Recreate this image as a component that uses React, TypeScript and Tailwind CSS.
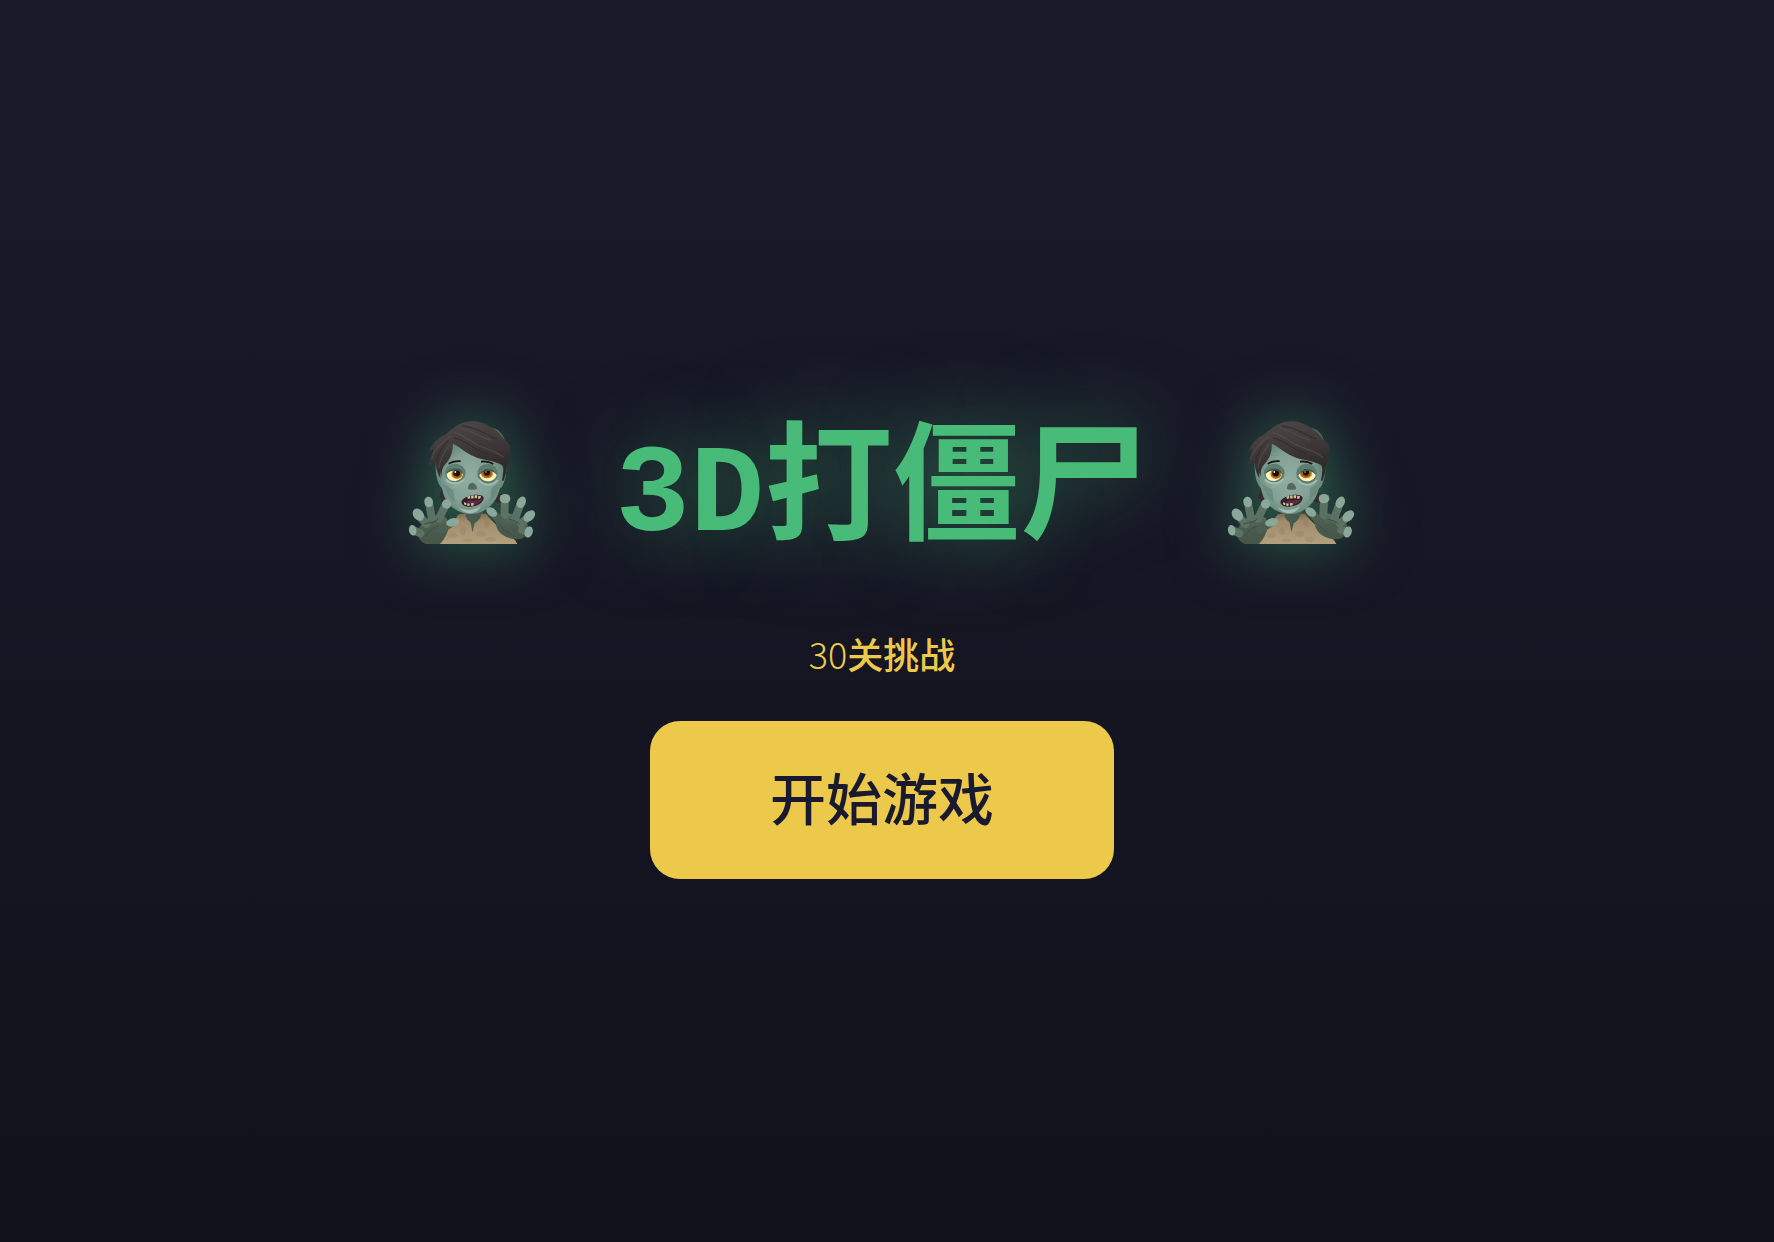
import { useId } from "react";

function Zombie() {
  const id = useId();
  const skin = `${id}-skin`;
  const hair = `${id}-hair`;
  const shirt = `${id}-shirt`;
  const palm = `${id}-palm`;
  const eye = `${id}-eye`;
  const fill = (name: string) => `url(#${name})`;

  return (
    <svg
      viewBox="60 57 381 369"
      role="img"
      aria-label="僵尸"
      className="h-[123px] w-[127px] shrink-0 overflow-visible drop-shadow-[0_0_32px_rgba(72,187,120,0.5)]"
    >
      <defs>
        <radialGradient id={skin} cx="0.48" cy="0.5" r="0.6">
          <stop offset="0" stopColor="#91aea2" />
          <stop offset="0.6" stopColor="#82a194" />
          <stop offset="1" stopColor="#5f7f73" />
        </radialGradient>
        <linearGradient id={hair} x1="0" y1="0" x2="0.3" y2="1">
          <stop offset="0" stopColor="#4f4848" />
          <stop offset="0.5" stopColor="#423b3b" />
          <stop offset="1" stopColor="#30292b" />
        </linearGradient>
        <linearGradient id={shirt} x1="0" y1="0" x2="0" y2="1">
          <stop offset="0" stopColor="#846a4e" />
          <stop offset="0.25" stopColor="#a08c6c" />
          <stop offset="1" stopColor="#b3a07e" />
        </linearGradient>
        <linearGradient id={palm} x1="0" y1="0" x2="0" y2="1">
          <stop offset="0" stopColor="#5b7163" />
          <stop offset="0.5" stopColor="#4a5c4e" />
          <stop offset="1" stopColor="#45564a" />
        </linearGradient>
        <radialGradient id={eye}>
          <stop offset="0.2" stopColor="#1b0c04" />
          <stop offset="0.5" stopColor="#8a4a09" />
          <stop offset="1" stopColor="#d98a1a" />
        </radialGradient>
      </defs>

      {/* hair behind the face */}
      <path d="M302 76c26 4 42 20 46 44l-20-8z" fill="#4c6c59" />
      <path d="M158 262l-10 28 10-3-2 11 34 6-12-45zM318 258l18 20 9-2-5 13 0 13-32-3z" fill="#352b2d" />
      <path d="M140 184c-1 30 4 60 18 74l18-10-4-70zM352 182c2 30-4 60-16 76l-16-8 6-70z" fill="#6b8b7e" />
      <path d="M140 180c0-70 45-115 110-115 62 0 103 34 104 85 1 30-2 66-10 86l-185-2c-12-14-19-34-19-54z" fill={fill(hair)} />

      {/* torn shirt */}
      <path d="M222 322l60 0-4 30-28 40-26-38z" fill="#465f53" />
      <path d="M145 426c10-20 38-50 64-89l20-2 5 17 18 14 20-16 7-15 12 0c22 30 64 62 87 79l7 12z" fill={fill(shirt)} />
      <path d="M228 340c8 13 15 17 18 25l4 26 5-19 2-8c11-7 14-13 17-24l-17-5z" fill="#48594d" />
      <g fill="#8b7757" opacity="0.25">
        <ellipse cx="190" cy="400" rx="14" ry="8" />
        <ellipse cx="222" cy="388" rx="9" ry="12" />
        <ellipse cx="275" cy="395" rx="14" ry="9" />
        <ellipse cx="305" cy="412" rx="16" ry="8" />
        <ellipse cx="236" cy="415" rx="14" ry="6" />
        <ellipse cx="294" cy="365" rx="9" ry="11" />
      </g>

      {/* head */}
      <path d="M193 126c-24 14-39 43-40 73 0 22 3 61 13 85 12 30 46 52 80 52 35 0 66-24 79-54 10-24 19-61 18-88-4-19-20-31-59-38z" fill={fill(skin)} />
      <path d="M160 240c8 14 27 14 33 27 5 11-1 22 8 37l-16-14c-12-15-20-36-25-50zM338 233c-9 19-31 18-33 30-1 12 5 20-4 35 14-10 31-38 37-65z" fill="#64877a" opacity="0.7" />
      <path d="M209 316c18 12 46 11 66-3-5 14-20 21-32 21-14 0-27-8-34-18z" fill="#b0c8bd" opacity="0.8" />
      <path d="M217 205c-10 25-12 43-30 54 20-2 32-15 38-32zM272 210c3 25 20 33 38 40-19 3-36-10-42-25z" fill="#a3beb1" opacity="0.35" />

      {/* eyes */}
      <ellipse cx="199" cy="213" rx="31" ry="28" fill="#5d7d71" />
      <ellipse cx="296" cy="215" rx="31" ry="30" fill="#5d7d71" />
      <path d="M171 233c13 14 41 16 55-2M270 233c14 20 42 20 56 1" fill="none" stroke="#a6beb2" strokeWidth="5" />
      <path d="M173 218c5-12 15-14 30-14 10 0 17 5 19 12-2 14-14 21-27 21-12-1-20-8-22-19z" fill="#fff1bb" />
      <path d="M271 220c5-12 13-16 26-16 14 0 22 6 26 16-4 13-15 18-27 18-13-1-21-8-25-18z" fill="#fff1bb" />
      <ellipse cx="204" cy="216" rx="17" ry="15" fill={fill(eye)} />
      <ellipse cx="294" cy="215" rx="18" ry="14" fill={fill(eye)} />
      <circle cx="203" cy="213" r="10" fill="#150b05" />
      <circle cx="294" cy="210" r="9" fill="#150b05" />
      <circle cx="199" cy="210" r="3" fill="#ffe0a0" />
      <circle cx="291" cy="210" r="2" fill="#ffe0a0" />
      <path d="M172 217c5-14 18-18 32-17 10 0 17 6 19 17-12-14-38-16-51 0zM270 219c8-15 18-18 28-18 12 0 21 6 26 18-12-15-38-17-54 0z" fill="#40584f" />
      <path d="M178 184c8-7 22-11 37-9l0 5c-14-1-26 2-35 8zM276 176c14-2 28 1 38 8l-2 4c-12-6-23-8-36-6z" fill="#171819" />

      {/* nose and mouth */}
      <path d="M236 260c2-13 7-19 15-18 7 1 12 9 14 18-7 4-21 5-29 0z" fill="#56675f" />
      <path d="M218 296c9-11 27-18 43-18 14 0 23 3 23 11-2 13-17 24-39 25-20 1-30-7-27-18z" fill="#361d2b" />
      <path d="M236 298l8-4 7 2 10-2 10 0 6-3 2 3c-8 10-17 15-32 15-9 0-13-5-11-11z" fill="#5a2c40" />
      <g fill="#cfc497">
        <path d="M235 284l8-3 1 8-7 2zM246 281l8-1 0 9-7 1zM257 280l8 0-1 9-7 0zM268 281l8 1-2 8-7 0zM225 301l7 2 0 7-7-3zM235 304l7 1-1 7-6-1zM246 304l8-1 0 7-7 2z" />
      </g>

      {/* fringe */}
      <path d="M112 194c15-18 13-34 23-54-7 3-11 7-15 11 8-26 27-47 62-59 13-22 43-35 72-34 34 3 64 19 78 49 13 3 27 13 33 27-1 8-3 11-3 20-3 15 1 24-8 33l-4 34c-3-12-4-20-11-32-30-16-59-13-85-26-23-10-39-25-63-39 2 20-4 42-17 57-12 13-17 21-16 43-4-13-10-24-14-37l2-17c-9 8-15 20-28 24l2-9z" fill={fill(hair)} />
      <g fill="none" strokeLinecap="round" strokeWidth="4">
        <path d="M196 92c35 9 54 34 91 46 25 8 40 14 57 28M214 80c39 4 58 28 92 34M128 170c10-31 30-50 55-66M150 196c5-30 18-52 33-68" stroke="#5e5555" opacity="0.5" />
        <path d="M196 108c41 9 55 36 100 47M222 72c43 3 65 26 100 38M142 182c3-28 20-50 36-66" stroke="#2b2425" opacity="0.5" />
      </g>

      {/* left hand */}
      <path d="M84 392c4-18 20-28 31-43l36-14 22 14 8 20c-4 24-14 41-28 57l-43 0c-12-6-22-16-26-34z" fill={fill(palm)} />
      <g fill="none" stroke="#5b7163" strokeWidth="24" strokeLinecap="round">
        <path d="M120 303l8 42M170 308l-20 42M88 338l24 28M72 384l22 10" />
        <path d="M190 361l-34 22" stroke="#4c5f52" />
      </g>
      <path d="M106 366c19-6 34-2 42-17M112 402c9-17 18-24 35-29" fill="none" stroke="#3d4f43" strokeWidth="3" />
      <g fill="#8aa899">
        <ellipse cx="119" cy="300" rx="13" ry="16" transform="rotate(-10 119 300)" />
        <ellipse cx="173" cy="306" rx="14" ry="14" />
        <ellipse cx="88" cy="338" rx="15" ry="20" transform="rotate(-38 88 338)" />
        <ellipse cx="71" cy="385" rx="11" ry="16" transform="rotate(-12 71 385)" />
        <ellipse cx="191" cy="361" rx="20" ry="12" transform="rotate(-14 191 361)" />
      </g>

      {/* right hand */}
      <path d="M320 350l27-21 36 12 30 22c7 7 8 22 1 33-7 12-20 18-40 15-31-6-57-22-54-61z" fill={fill(palm)} />
      <g fill="none" stroke="#5b7163" strokeWidth="24" strokeLinecap="round">
        <path d="M348 293l-2 46M395 304l-16 44M420 343l-24 22M418 390l-18-6" />
        <path d="M310 331l28 32" stroke="#4c5f52" />
      </g>
      <path d="M360 352c14 2 24 6 31 14M330 364c9 16 20 24 31 28" fill="none" stroke="#3d4f43" strokeWidth="3" />
      <g fill="#8aa899">
        <ellipse cx="348" cy="290" rx="16" ry="14" />
        <ellipse cx="397" cy="301" rx="13" ry="18" transform="rotate(24 397 301)" />
        <ellipse cx="421" cy="342" rx="20" ry="14" transform="rotate(-42 421 342)" />
        <ellipse cx="419" cy="390" rx="12" ry="17" transform="rotate(18 419 390)" />
        <ellipse cx="308" cy="330" rx="18" ry="12" transform="rotate(38 308 330)" />
      </g>
    </svg>
  );
}

export default function App() {
  return (
    <main className="flex min-h-screen flex-col items-center justify-center bg-linear-to-b from-[#1a1a2b] to-[#12121c] pt-4 pr-[10px] font-['Noto_Sans_CJK_SC',sans-serif]">
      <div className="mb-12 flex items-center justify-center gap-20">
        <Zombie />
        <h1 className="pt-2 text-[128px] leading-[176px] font-bold whitespace-nowrap text-[#48bb78] [text-shadow:0_0_80px_rgba(72,187,120,0.5)]">
          <span className="font-['Liberation_Mono',monospace] text-[124px]">3D</span>
          打僵尸
        </h1>
        <Zombie />
      </div>
      <p className="mb-12 text-4xl text-[#ecc94b]">
        <span className="font-light">30</span>
        <span className="font-medium">关挑战</span>
      </p>
      <button
        type="button"
        className="cursor-pointer rounded-[30px] bg-[#ecc94b] px-30 pt-8 pb-10 text-[56px] leading-[86px] font-medium text-[#1a1a2e]"
      >
        开始游戏
      </button>
    </main>
  );
}
